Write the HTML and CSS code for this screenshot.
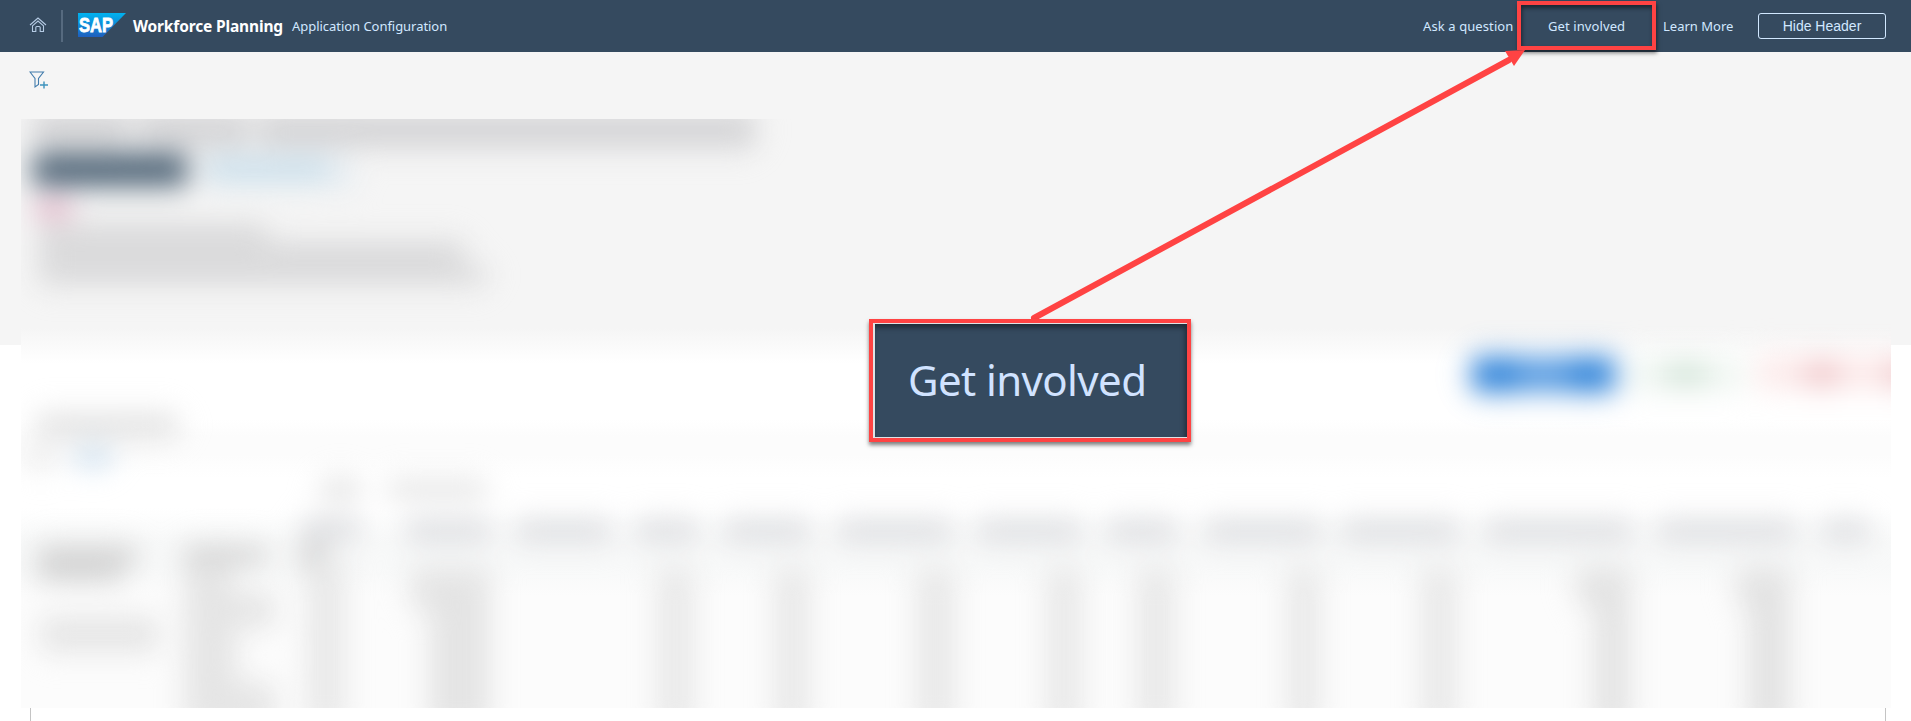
FILE: index.html
```html
<!DOCTYPE html>
<html lang="en">
<head>
<meta charset="utf-8">
<title>Workforce Planning</title>
<link rel="stylesheet" href="styles.css">
</head>
<body>
<header class="shell">
  <svg class="home" viewBox="0 0 18 16" width="18" height="16"><path d="M1 8 9 1l8 7M3.200 9.200 9 4l5.800 5.200M3.500 9v5.500h3.300V10.500q0-1 1-1h2.400q1 0 1 1v4h3.300V9"/></svg>
  <span class="divider"></span>
  <svg class="logo" viewBox="0 0 48 24" width="48" height="24">
    <defs><linearGradient id="sap" x2="0" y2="1"><stop offset="0" stop-color="#00b4f0"/><stop offset="1" stop-color="#1e5fbe"/></linearGradient></defs>
    <path fill="url(#sap)" d="M0 0h48L24.500 24H0z"/>
    <text class="logo-text" x="1" y="19" textLength="34" lengthAdjust="spacingAndGlyphs">SAP</text>
  </svg>
  <strong class="product">Workforce Planning</strong>
  <span class="app">Application Configuration</span>
  <nav class="nav">
    <span class="ask">Ask a question</span>
    <span class="involved">Get involved</span>
    <span class="learn">Learn More</span>
    <button class="hide">Hide Header</button>
  </nav>
</header>
<section class="filterbar">
  <svg class="filter" viewBox="0 0 20 18" width="20" height="18"><path d="M1 1h13.500L9.500 7.500v6L6 16V7.500z"/><path class="plus" d="M11 14h8M15 10.500v7"/></svg>
</section>
<main class="page">
  <div class="redacted">
  <svg class="smudges" viewBox="21 119 1870 589" width="1870" height="589">
    <defs>
      <linearGradient id="ground" gradientUnits="userSpaceOnUse" x1="0" x2="0" y1="119" y2="708">
        <stop offset="0" stop-color="#f5f5f5"/><stop offset=".355" stop-color="#f5f5f5"/><stop offset=".385" stop-color="#fafafa"/><stop offset=".415" stop-color="#fff"/><stop offset=".51" stop-color="#fff"/><stop offset=".54" stop-color="#fcfcfc"/><stop offset=".57" stop-color="#fcfcfc"/><stop offset=".61" stop-color="#fff"/><stop offset=".66" stop-color="#fff"/><stop offset=".72" stop-color="#f8f9f9"/><stop offset=".76" stop-color="#f8f9f9"/><stop offset=".81" stop-color="#fcfcfc"/><stop offset="1" stop-color="#fcfcfc"/>
      </linearGradient>
    </defs>
    <rect x="21" y="119" width="1870" height="589" fill="url(#ground)"/>
    <g class="soft">
      <path fill="#d4d4d6" d="M33 112h97v36H33zM138 112h112v36H138zM258 112h497v36H258z"/>
      <path fill="#4b6174" d="M33 154h154v32H33z"/>
      <path fill="#cce0ec" d="M206 156h122v27H206z"/>
      <path fill="#e6edf2" d="M328 156h24v33h-24z"/>
      <path fill="#e6b4c8" d="M35 200h37v18H35z"/>
      <path fill="#dadadb" d="M39 223h228v18h197v25h22v19H39z"/>
      <path fill="#e0e0e0" d="M37 414h140v23H37z"/>
      <path fill="#ebebeb" d="M28 447h26v22H28z"/>
      <path fill="#c8ddef" d="M75 449h36v17H75z"/>
      <path fill="#dedede" d="M322 480h37v18h-37z"/>
      <path fill="#e3e3e3" d="M388 480h98v18h-98z"/>
      <path fill="#dcdde0" d="M303 518h57v22h-57zM406 520h85v22h-85zM516 520h95v22h-95zM636 520h62v22h-62zM724 520h86v22h-86zM838 520h114v22H838zM977 520h104v22H977zM1107 520h70v22h-70zM1205 520h116v22h-116zM1342 520h117v22h-117zM1485 520h147v22h-147zM1657 520h139v22h-139zM1822 520h47v22h-47z"/>
      <path fill="#d2d2d2" d="M38 546h99v20h-15v15H38zM184 546h83v18h-83zM300 542h27v31h-27z"/>
      <path fill="#e5e5e5" d="M41 617h117v35H41zM184 564h49v28h42v36h-38v54h38v50h-91z"/>
      <path fill="#e4e4e4" d="M411 568h79v164h-61V610h-18z"/>
      <path fill="#e8e8e8" d="M307 560h38v172h-38zM657 568h37v164h-37zM774 568h36v164h-36zM916 568h39v164h-39zM1046 568h36v164h-36zM1137 568h38v164h-38zM1287 568h33v164h-33zM1421 568h36v164h-36z"/>
      <path fill="#e2e2e2" d="M1577 568h53v164h-36V605h-17zM1737 568h53v164h-42V605h-11z"/>
      <path fill="#2a80d8" d="M1472 357h143v35h-143z"/>
      <path fill="#569ae0" d="M1516 357h54v35h-54z"/>
      <path fill="#f1f7f3" d="M1627 357h118v35h-118z"/>
      <path fill="#cfe2d5" d="M1665 364h42v20h-42z"/>
      <path fill="#fcebeb" d="M1757 355h160v35h-160z"/>
      <path fill="#efc5c8" d="M1805 363h34v22h-34zM1886 363h34v22h-34z"/>
    </g>
  </svg>
  </div>
  <div class="frame"></div>
</main>
<div class="mark"></div>
<svg class="arrow" viewBox="0 0 520 290" width="520" height="290"><path class="shaft" d="M24 277 499 19"/><path class="head" d="M495 10 515 9 504 25z"/></svg>
<div class="callout"><div class="callout-body"><span>Get involved</span></div></div>
</body>
</html>
```

FILE: styles.css
```css
* { box-sizing: border-box; }
body { margin: 0; width: 1911px; height: 721px; overflow: hidden; position: relative; background: #fff; font-family: "Noto Sans", sans-serif; }
.shell { height: 52px; background: #354a5f; display: flex; align-items: center; color: #d1e8ff; font-size: 13px; white-space: nowrap; }
.home { margin: -3px 0 0 29px; fill: none; stroke: #b5cbe4; stroke-width: 1.1; }
.divider { width: 2px; height: 32px; margin-left: 14px; background: #566a7f; }
.logo { margin: -2px 0 0 15px; }
.logo-text { font: bold 20px "Liberation Sans", sans-serif; fill: #fff; stroke: #fff; stroke-width: .8px; }
.product { width: 150px; margin: -1px 0 0 7px; font-size: 15.500px; letter-spacing: -.15px; color: #fff; }
.app { width: 156px; margin-left: 9px; font-size: 13px; letter-spacing: -.04px; }
.nav { display: flex; align-items: center; margin-left: auto; margin-right: 25px; }
.ask { width: 91px; letter-spacing: .1px; }
.involved { width: 78px; margin-left: 34px; letter-spacing: .1px; }
.learn { width: 71px; margin-left: 37px; }
.hide { width: 128px; height: 26px; margin-left: 24px; padding: 0; border: 1px solid #d1e8ff; border-radius: 3px; background: transparent; color: #d1e8ff; font: 14px "Liberation Sans", sans-serif; }
.filterbar { height: 67px; padding: 19px 0 0 29px; background: #f5f5f5; }
.filter { display: block; fill: none; stroke: #427cac; stroke-width: 1.1; }
.plus { stroke: #3d92bd; stroke-width: 1.4; }
.page { height: 602px; padding: 0 20px 0 21px; background: linear-gradient(#f5f5f5 226px, #fff 226px); }
.redacted { height: 589px; overflow: hidden; }
.smudges { display: block; }
.soft { filter: blur(6px) blur(6px) blur(6px) blur(6px) blur(6px) blur(6px); }
.frame { height: 13px; margin: 0 5px 0 9px; border: solid #c4c4c4; border-width: 0 1px; }
.mark { position: absolute; left: 1517px; top: 1px; width: 139px; height: 49px; border: 4px solid #ff4343; box-shadow: 1px 3px 4px rgba(0,0,0,.5), inset 1px 3px 4px rgba(0,0,0,.5); }
.arrow { position: absolute; left: 1010px; top: 41px; }
.shaft { stroke: #ff4343; stroke-width: 6; stroke-linecap: round; }
.head { fill: #ff4343; }
.callout { position: absolute; left: 869px; top: 319px; width: 322px; height: 123px; border: 4px solid #ff4343; padding: 1px 0 1px 2px; background: #dfe2e5; box-shadow: 0 3px 4px rgba(0,0,0,.5); }
.callout-body { height: 113px; padding: 0 0 2px 33px; display: flex; align-items: center; background: #354a5f; color: #d1e3ff; font-size: 42px; letter-spacing: -.6px; white-space: nowrap; box-shadow: inset -2px 4px 5px rgba(0,0,0,.4); }
```
